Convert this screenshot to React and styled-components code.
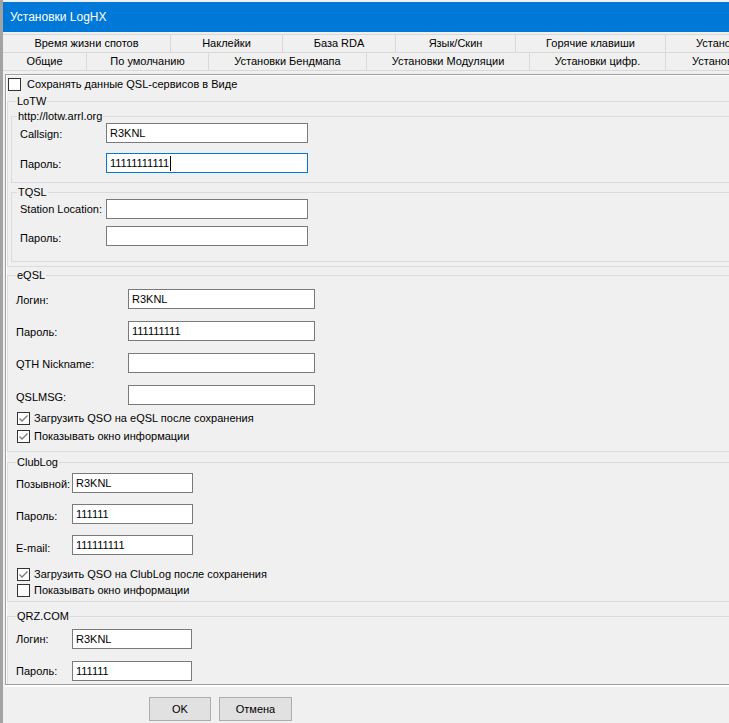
import React from "react";
import styled, { createGlobalStyle } from "styled-components";

const GlobalStyle = createGlobalStyle`
  html, body {
    margin: 0;
    padding: 0;
    background: #eeeeee;
    overflow: hidden;
  }
  #root {
    width: 729px;
    height: 723px;
    overflow: hidden;
  }
`;

const tabsBack = [
  { label: "Время жизни спотов", w: 168 },
  { label: "Наклейки", w: 112 },
  { label: "База RDA", w: 113 },
  { label: "Язык/Скин", w: 120 },
  { label: "Горячие клавиши", w: 150 },
  { label: "Установки CAT", w: 160, lead: 30 },
];

const tabsFront = [
  { label: "Общие", w: 84 },
  { label: "По умолчанию", w: 122 },
  { label: "Установки Бендмапа", w: 158 },
  { label: "Установки Модуляции", w: 163 },
  { label: "Установки цифр.", w: 136 },
  { label: "Установки SDR", w: 160, lead: 26 },
];

const App = () => {
  return (
    <>
      <GlobalStyle />
      <StyledWindow>
        <StyledTitleBar>Установки LogHX</StyledTitleBar>
        <StyledTabStrip>
          <StyledTabRow>
            {tabsBack.map((t) => (
              <StyledTab key={t.label} $w={t.w} $lead={t.lead}>
                {t.label}
              </StyledTab>
            ))}
          </StyledTabRow>
          <StyledTabRow $front>
            {tabsFront.map((t) => (
              <StyledTab key={t.label} $w={t.w} $lead={t.lead}>
                {t.label}
              </StyledTab>
            ))}
          </StyledTabRow>
        </StyledTabStrip>

        <StyledPanel>
          <CheckBox label="Сохранять данные QSL-сервисов в Виде" gap={6} />

          <StyledGroup $w={800} $mt={2} $pt={1} $pb={4}>
            <StyledLegend>LoTW</StyledLegend>
            <StyledGroup $w={790} $mt={0} $pt={0} $pb={9} $ml={-5}>
              <StyledLegend $shift={-3}>http://lotw.arrl.org</StyledLegend>
              <Field label="Callsign:" labelW={86} boxW={202} value="R3KNL" dy={4} />
              <Field
                label="Пароль:"
                labelW={86}
                boxW={202}
                value="11111111111"
                mt={10}
                dy={4}
                focused
              />
            </StyledGroup>
            <StyledGroup $w={790} $mt={2} $pt={0} $pb={15} $ml={-5}>
              <StyledLegend $shift={-3}>TQSL</StyledLegend>
              <Field label="Station Location:" labelW={86} boxW={202} dy={3} />
              <Field label="Пароль:" labelW={86} boxW={202} mt={7} dy={5} />
            </StyledGroup>
          </StyledGroup>

          <StyledGroup $w={800} $mt={1} $pt={7} $pb={6}>
            <StyledLegend>eQSL</StyledLegend>
            <Field label="Логин:" labelW={112} boxW={187} value="R3KNL" dy={4} />
            <Field label="Пароль:" labelW={112} boxW={187} value="111111111" mt={12} dy={4} />
            <Field label="QTH Nickname:" labelW={112} boxW={187} mt={12} dy={4} />
            <Field label="QSLMSG:" labelW={112} boxW={187} mt={12} dy={5} />
            <StyledChecks $mt={4} $rowH={18}>
              <CheckBox label="Загрузить QSO на eQSL после сохранения" checked />
              <CheckBox label="Показывать окно информации" checked />
            </StyledChecks>
          </StyledGroup>

          <StyledGroup $w={800} $mt={3} $pt={4} $pb={3}>
            <StyledLegend>ClubLog</StyledLegend>
            <Field label="Позывной:" labelW={56} boxW={121} value="R3KNL" dy={4} />
            <Field label="Пароль:" labelW={56} boxW={121} value="111111" mt={11} dy={5} />
            <Field label="E-mail:" labelW={56} boxW={121} value="111111111" mt={11} dy={6} />
            <StyledChecks $mt={11} $rowH={16}>
              <CheckBox label="Загрузить QSO на ClubLog после сохранения" checked />
              <CheckBox label="Показывать окно информации" />
            </StyledChecks>
          </StyledGroup>

          <StyledGroup $w={800} $mt={7} $pt={6} $pb={6}>
            <StyledLegend>QRZ.COM</StyledLegend>
            <Field label="Логин:" labelW={56} boxW={120} value="R3KNL" dy={3} />
            <Field label="Пароль:" labelW={56} boxW={120} value="111111" mt={12} dy={3} />
          </StyledGroup>
        </StyledPanel>

        <StyledButtonBar>
          <StyledButton $w={62}>OK</StyledButton>
          <StyledButton $w={73}>Отмена</StyledButton>
        </StyledButtonBar>
      </StyledWindow>
    </>
  );
};

//Field component
const Field = ({ label, labelW, boxW, value = "", mt = 0, dy = 1, focused }) => {
  return (
    <StyledFieldRow $mt={mt}>
      <StyledLabel $w={labelW} $dy={dy}>
        {label}
      </StyledLabel>
      <StyledTextBox $w={boxW} $focused={focused}>
        {value}
        {focused && <StyledCaret />}
      </StyledTextBox>
    </StyledFieldRow>
  );
};

//CheckBox component
const CheckBox = ({ label, checked, gap = 4 }) => {
  return (
    <StyledCheckRow $gap={gap}>
      <StyledBox>
        {checked && (
          <svg width="11" height="11" viewBox="0 0 11 11">
            <polyline
              points="1.5,5.5 4,8 9.5,2.5"
              fill="none"
              stroke="#7a7a7a"
              strokeWidth="1.3"
            />
          </svg>
        )}
      </StyledBox>
      <span>{label}</span>
    </StyledCheckRow>
  );
};

//styling
const StyledWindow = styled.div`
  width: 820px;
  height: 721px;
  padding-top: 2px;
  border-left: 3px solid #a3a3a3;
  background: #f0f0f0;
  font-family: "Liberation Sans", Arial, sans-serif;
  font-size: 11px;
  color: #000;
`;
const StyledTitleBar = styled.div`
  height: 30px;
  display: flex;
  align-items: center;
  padding-left: 7px;
  background: #0078d7;
  color: #fff;
  font-size: 12px;
`;
const StyledTabStrip = styled.div`
  margin-top: 2px;
`;
const StyledTabRow = styled.div`
  display: flex;
  box-sizing: border-box;
  height: ${(p) => (p.$front ? 19 : 18)}px;
  border-top: 1px solid #d9d9d9;
  border-bottom: ${(p) => (p.$front ? "1px solid #d9d9d9" : "none")};
`;
const StyledTab = styled.div`
  flex: 0 0 ${(p) => p.$w}px;
  box-sizing: border-box;
  border-right: 1px solid #d9d9d9;
  line-height: 17px;
  white-space: nowrap;
  overflow: hidden;
  text-align: ${(p) => (p.$lead ? "left" : "center")};
  padding-left: ${(p) => p.$lead || 0}px;
`;
const StyledPanel = styled.div`
  box-sizing: border-box;
  height: 611px;
  margin: 3px 0 0 2px;
  padding: 1px 0 0 2px;
  border: 1px solid #a0a0a0;
  box-shadow: inset 1px 1px 0 #ffffff, 0 2px 0 #ffffff;
  overflow: hidden;
`;
const StyledGroup = styled.fieldset`
  box-sizing: border-box;
  width: ${(p) => p.$w}px;
  margin: ${(p) => p.$mt}px 0 0 ${(p) => p.$ml ?? -1}px;
  padding: ${(p) => p.$pt}px 8px ${(p) => p.$pb}px;
  border: 1px solid #dcdcdc;
  min-width: 0;
`;
const StyledLegend = styled.legend`
  padding: 0 1px;
  margin-left: ${(p) => p.$shift || 0}px;
  line-height: 14px;
`;
const StyledFieldRow = styled.div`
  display: flex;
  align-items: flex-start;
  height: 20px;
  margin-top: ${(p) => p.$mt}px;
`;
const StyledLabel = styled.div`
  flex: 0 0 ${(p) => p.$w}px;
  padding-top: ${(p) => p.$dy}px;
  line-height: 14px;
  white-space: nowrap;
`;
const StyledTextBox = styled.div`
  box-sizing: border-box;
  width: ${(p) => p.$w}px;
  height: 20px;
  display: flex;
  align-items: center;
  padding-left: 3px;
  background: #fff;
  border: 1px solid ${(p) => (p.$focused ? "#0078d7" : "#7a7a7a")};
  white-space: nowrap;
`;
const StyledCaret = styled.span`
  display: inline-block;
  width: 1px;
  height: 15px;
  margin-left: 1px;
  background: #000;
`;
const StyledChecks = styled.div`
  margin-top: ${(p) => p.$mt}px;
  margin-left: 1px;
  & > div {
    height: ${(p) => p.$rowH}px;
  }
`;
const StyledCheckRow = styled.div`
  display: flex;
  align-items: center;
  height: 16px;
  gap: ${(p) => p.$gap}px;
  white-space: nowrap;
`;
const StyledBox = styled.span`
  box-sizing: border-box;
  flex: 0 0 13px;
  height: 13px;
  display: flex;
  align-items: center;
  justify-content: center;
  background: #fff;
  border: 1px solid #333;
`;
const StyledButtonBar = styled.div`
  display: flex;
  gap: 8px;
  margin: 12px 0 0 146px;
`;
const StyledButton = styled.button`
  box-sizing: border-box;
  width: ${(p) => p.$w}px;
  height: 24px;
  padding: 0;
  background: #e1e1e1;
  border: 1px solid #adadad;
  font-family: "Liberation Sans", Arial, sans-serif;
  font-size: 11px;
  color: #000;
`;

export default App;
